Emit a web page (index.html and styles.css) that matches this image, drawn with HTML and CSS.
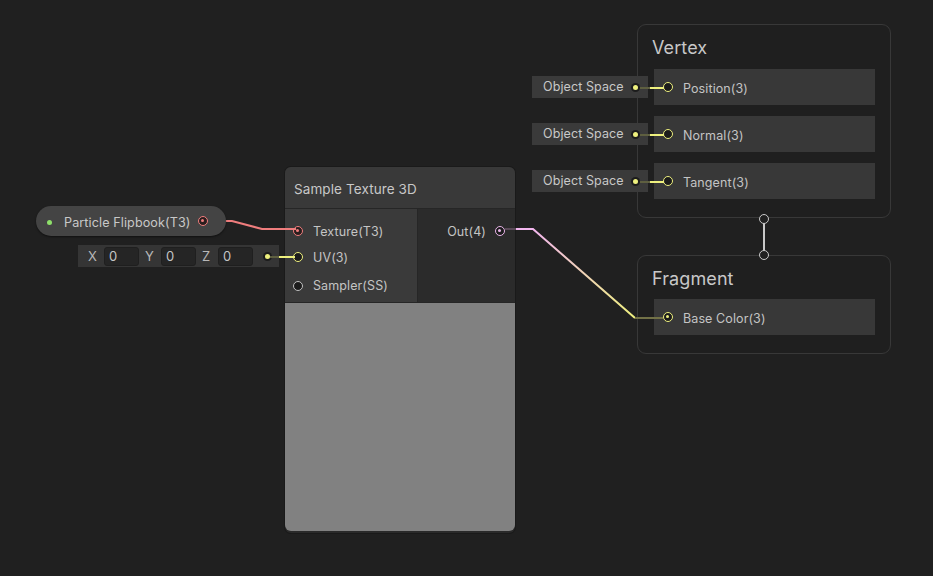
FILE: index.html
```html
<!DOCTYPE html>
<html>
<head>
<meta charset="utf-8">
<link rel="stylesheet" href="styles.css">
</head>
<body>
<div class="canvas">
  <svg class="wires" width="933" height="576" viewBox="0 0 933 576">
    <defs>
      <linearGradient id="outgrad" x1="533" y1="229" x2="635" y2="318" gradientUnits="userSpaceOnUse">
        <stop offset="0" stop-color="#f2b6ee"/>
        <stop offset="1" stop-color="#eef07e"/>
      </linearGradient>
    </defs>
    <path d="M208 221 L232 221 L262 229 L296 229" class="w-red"/>
    <path d="M270 257 L279 257" class="w-dimy"/>
    <path d="M279 257 L295 257" class="w-yel"/>
    <path d="M505 229 L516 229" class="w-dimp"/>
    <path d="M516 229 L533 229 L635 318" stroke="url(#outgrad)" class="w-grad"/>
    <path d="M635 318 L663 318" class="w-olive"/>
    <path d="M640 88 L650 88" class="w-dimy"/>
    <path d="M650 88 L664 88" class="w-yel"/>
    <path d="M640 135 L650 135" class="w-dimy"/>
    <path d="M650 135 L664 135" class="w-yel"/>
    <path d="M640 182 L650 182" class="w-dimy"/>
    <path d="M650 182 L664 182" class="w-yel"/>
    <path d="M764 223 L764 251" class="w-grey"/>
  </svg>

  <div class="prop-node">
    <span class="dot dot-green"></span>
    <span class="prop-label">Particle Flipbook(T3)</span>
    <span class="port port-red filled"></span>
  </div>

  <div class="vec-field">
    <span class="axis">X</span><span class="num">0</span>
    <span class="axis">Y</span><span class="num">0</span>
    <span class="axis">Z</span><span class="num">0</span>
    <span class="dot dot-yellow"></span>
  </div>

  <div class="node">
    <div class="node-title">Sample Texture 3D</div>
    <div class="node-ports">
      <div class="inputs">
        <div class="port-row"><span class="port port-red filled"></span><span>Texture(T3)</span></div>
        <div class="port-row"><span class="port port-yellow"></span><span>UV(3)</span></div>
        <div class="port-row tall"><span class="port port-grey"></span><span>Sampler(SS)</span></div>
      </div>
      <div class="outputs">
        <div class="port-row out"><span>Out(4)</span><span class="port port-pink filled"></span></div>
      </div>
    </div>
    <div class="preview"></div>
  </div>

  <div class="space-field f1"><span>Object Space</span><span class="dot dot-yellow"></span></div>
  <div class="space-field f2"><span>Object Space</span><span class="dot dot-yellow"></span></div>
  <div class="space-field f3"><span>Object Space</span><span class="dot dot-yellow"></span></div>

  <div class="context vertex">
    <div class="ctx-title">Vertex</div>
    <div class="block"><span class="port port-yellow"></span><span>Position(3)</span></div>
    <div class="block"><span class="port port-yellow"></span><span>Normal(3)</span></div>
    <div class="block"><span class="port port-yellow"></span><span>Tangent(3)</span></div>
  </div>

  <span class="flow-port fp-top"></span>
  <span class="flow-port fp-bottom"></span>

  <div class="context fragment">
    <div class="ctx-title">Fragment</div>
    <div class="block"><span class="port port-yellow filled"></span><span>Base Color(3)</span></div>
  </div>
</div>
</body>
</html>
```

FILE: styles.css
```css
* { box-sizing: border-box; }
html, body {
  margin: 0;
  padding: 0;
  background: #202020;
}
body {
  font-family: Inter, "Noto Sans", sans-serif;
  font-size: 12.5px;
  color: #c4c4c4;
  letter-spacing: 0.1px;
}
.canvas {
  position: relative;
  width: 933px;
  height: 576px;
  overflow: hidden;
}
.wires {
  position: absolute;
  left: 0;
  top: 0;
  z-index: 5;
  pointer-events: none;
}
.wires path { fill: none; stroke-width: 2; }
.w-red { stroke: #ef7d7d; }
.w-yel { stroke: #eef07e; }
.w-dimy { stroke: #5e5f40; }
.w-dimp { stroke: #5a4a58; }
.w-olive { stroke: #727147; }
.w-grad { stroke-width: 2; }
.w-grey { stroke: #c8c8c8; }

/* ports */
.port {
  width: 10px;
  height: 10px;
  border-radius: 50%;
  border: 1.5px solid #b8b8b8;
  background: #1c1c1c;
  flex: none;
  position: relative;
  z-index: 6;
}
.port.filled::after {
  content: "";
  position: absolute;
  left: 2px;
  top: 2px;
  width: 3px;
  height: 3px;
  border-radius: 50%;
  background: currentColor;
}
.port-red { border-color: #ef7d7d; color: #ef7d7d; background: #2a1e1e; }
.port-yellow { border-color: #eef07e; color: #eef07e; }
.port-grey { border-color: #c0c0c0; }
.port-pink { border-color: #eab5ea; color: #eab5ea; }

.dot {
  width: 5px;
  height: 5px;
  border-radius: 50%;
  flex: none;
}
.dot-green { background: #8ee06a; }
.dot-yellow { background: #eef07e; box-shadow: 0 0 0 2px #1c1c1c; }

/* property node */
.prop-node {
  position: absolute;
  left: 36px;
  top: 206px;
  width: 190px;
  height: 30px;
  border-radius: 15px;
  background: #444444;
  box-shadow: 0 1px 2px rgba(0,0,0,0.5);
  display: flex;
  align-items: center;
  padding-left: 11px;
  padding-right: 18px;
  padding-top: 2px;
  z-index: 6;
}
.prop-label { margin-left: 12px; flex: 1; color: #c8c8c8; font-size: 12.6px; }
.prop-node .port { margin-top: -3px; }

/* vector field */
.vec-field {
  position: absolute;
  left: 78px;
  top: 245px;
  width: 201px;
  height: 22px;
  background: #353535;
  display: flex;
  align-items: center;
  padding-left: 10px;
  z-index: 4;
}
.vec-field .axis { width: 16px; color: #b8b8b8; font-size: 13px; }
.vec-field .num {
  width: 35px;
  height: 19px;
  background: #252525;
  border: 1px solid #1f1f1f;
  border-radius: 3px;
  padding-left: 4px;
  line-height: 17px;
  margin-right: 6px;
  color: #c4c4c4;
  font-size: 13px;
}
.vec-field .dot { margin-left: 6px; }

/* main node */
.node {
  position: absolute;
  left: 285px;
  top: 167px;
  width: 230px;
  height: 366px;
  background: #2a2a2a;
  border-radius: 6px;
  display: flex;
  flex-direction: column;
  overflow: hidden;
  box-shadow: 0 0 0 1px #1a1a1a;
  z-index: 3;
}
.node-title {
  height: 42px;
  background: #393939;
  display: flex;
  align-items: center;
  padding-left: 9px;
  padding-top: 2px;
  font-size: 13.5px;
  color: #c8c8c8;
  border-bottom: 1px solid #262626;
}
.node-ports {
  display: flex;
  height: 94px;
  border-bottom: 1px solid #262626;
}
.inputs {
  width: 133px;
  background: #3a3a3a;
  padding-top: 9px;
  border-right: 1px solid #262626;
}
.outputs {
  flex: 1;
  background: #2b2b2b;
  padding-top: 9px;
}
.port-row {
  height: 26px;
  display: flex;
  align-items: center;
  gap: 10px;
  padding-left: 8px;
}
.port-row.tall { height: 31px; }
.port-row.out {
  justify-content: flex-end;
  padding-left: 0;
  padding-right: 10px;
  gap: 9px;
}
.preview {
  flex: 1;
  background: #818181;
  border-radius: 0 0 6px 6px;
  margin-bottom: 2px;
}

/* object space fields */
.space-field {
  position: absolute;
  left: 532px;
  width: 116px;
  height: 22px;
  background: #3a3a3a;
  display: flex;
  align-items: center;
  justify-content: space-between;
  padding-left: 11px;
  padding-right: 10px;
  font-size: 12.5px;
  color: #c8c8c8;
  z-index: 4;
}
.space-field span:first-child { margin-top: -2px; }
.f1 { top: 76px; }
.f2 { top: 123px; }
.f3 { top: 170px; }

/* contexts */
.context {
  position: absolute;
  left: 637px;
  width: 254px;
  border: 1px solid #383838;
  border-radius: 9px;
  background: #1f1f1f;
  padding: 13px 15px 0 16px;
  display: flex;
  flex-direction: column;
  gap: 11px;
  z-index: 2;
}
.vertex { top: 24px; height: 194px; }
.fragment { top: 255px; height: 99px; }
.fragment .block { margin-top: -1px; }
.ctx-title {
  font-size: 18px;
  color: #c8c8c8;
  height: 20px;
  line-height: 20px;
  margin-left: -2px;
}
.block {
  height: 36px;
  background: #383838;
  display: flex;
  align-items: center;
  padding-left: 9px;
  padding-top: 2px;
  gap: 10px;
  font-size: 12.5px;
  color: #c4c4c4;
}
.block .port { margin-top: -2px; }

.flow-port {
  position: absolute;
  left: 759px;
  width: 10px;
  height: 10px;
  border-radius: 50%;
  border: 1.5px solid #c8c8c8;
  background: #202020;
  z-index: 6;
}
.fp-top { top: 214px; }
.fp-bottom { top: 250px; }
```
